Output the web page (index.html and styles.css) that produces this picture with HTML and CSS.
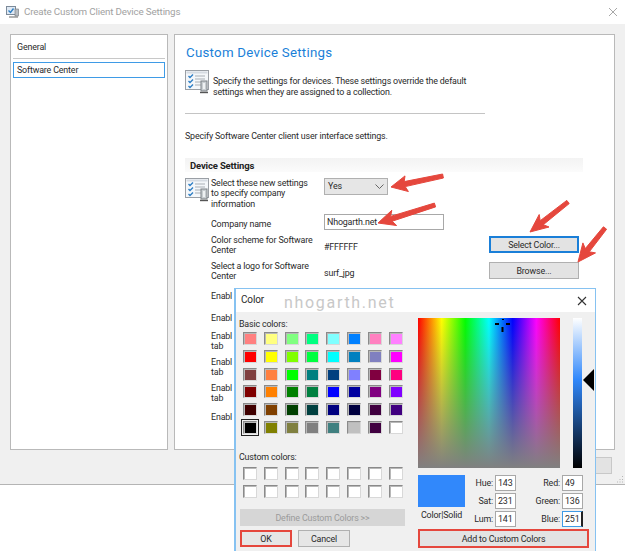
FILE: index.html
```html
<!DOCTYPE html>
<html lang="en">
<head>
<meta charset="utf-8">
<title>Create Custom Client Device Settings</title>
<link rel="stylesheet" href="styles.css">
</head>
<body>
<svg class="defs" width="0" height="0" aria-hidden="true">
  <symbol id="checklist" viewBox="0 0 25 24">
    <rect x="0.5" y="0.5" width="23" height="19" fill="#f4f7fa" stroke="#9a9fa5"/>
    <rect x="1.5" y="1.5" width="21" height="2" fill="#d5dbe2"/>
    <path d="M3.5 6l1.5 1.5L8 4.5M3.5 11l1.5 1.5L8 9.5M3.5 16l1.5 1.5L8 14.5" fill="none" stroke="#2f7fc4" stroke-width="1.4"/>
    <path d="M10 6h10M10 9h10M10 12h7M10 15h6" stroke="#a9afb5"/>
    <rect x="16" y="11" width="6" height="10" fill="#c9ced2" stroke="#7d8286"/>
    <rect x="18" y="13" width="2" height="6" fill="#eef1f2"/>
    <path d="M15 22.5h8" stroke="#555" stroke-width="1.4"/>
  </symbol>
</svg>

<div class="window">
  <header class="titlebar">
    <svg class="title-icon" viewBox="0 0 13 12" aria-hidden="true">
      <rect x="0.5" y="0.5" width="9" height="8" fill="#dfe9f4" stroke="#7c8a99"/>
      <path d="M2.5 4.5l2 2 3-4" fill="none" stroke="#2f7fc4" stroke-width="1.4"/>
      <rect x="9" y="3" width="3.5" height="7" fill="#b9bec3" stroke="#6f7478" stroke-width=".6"/>
      <path d="M3 11h9" stroke="#666"/>
    </svg>
    <span class="title-text">Create Custom Client Device Settings</span>
    <svg class="title-close" viewBox="0 0 10 10" aria-hidden="true"><path d="M1 1l8 8M9 1l-8 8" stroke="#a8a8a8"/></svg>
  </header>

  <div class="workspace">
    <div class="panels">
      <nav class="nav-panel">
        <div class="nav-general">General</div>
        <div class="nav-active">Software Center</div>
      </nav>
      <main class="content-panel">
        <h1 class="page-title">Custom Device Settings</h1>
        <div class="intro">
          <svg class="list-icon"><use href="#checklist"/></svg>
          <p>Specify the settings for devices. These settings override the default<br>settings when they are assigned to a collection.</p>
        </div>
        <hr class="rule">
        <p class="lead">Specify Software Center client user interface settings.</p>
        <h2 class="section-head">Device Settings</h2>
        <div class="form">
          <div class="row row-1">
            <svg class="list-icon"><use href="#checklist"/></svg>
            <div class="label label-first">Select these new settings<br>to specify company<br>information</div>
            <div class="select">Yes<svg class="chev" viewBox="0 0 9 5" aria-hidden="true"><path d="M.5.5l4 4 4-4" fill="none" stroke="#666"/></svg></div>
          </div>
          <div class="row row-2">
            <div class="label">Company name</div>
            <div class="input">Nhogarth.net</div>
          </div>
          <div class="row row-3">
            <div class="label">Color scheme for Software<br>Center</div>
            <div class="value">#FFFFFF</div>
            <div class="btn btn-focus">Select Color...</div>
          </div>
          <div class="row row-4">
            <div class="label">Select a logo for Software<br>Center</div>
            <div class="value">surf_jpg</div>
            <div class="btn">Browse...</div>
          </div>
          <div class="row row-5"><div class="label">Enabl</div></div>
          <div class="row row-6"><div class="label">Enabl</div></div>
          <div class="row row-7"><div class="label">Enabl<br>tab</div></div>
          <div class="row row-8"><div class="label">Enabl<br>tab</div></div>
          <div class="row row-9"><div class="label">Enabl<br>tab</div></div>
          <div class="row row-10"><div class="label">Enabl</div></div>
        </div>
      </main>
    </div>
    <div class="wizard-foot"><div class="foot-btn"></div></div>
    <svg class="grip" viewBox="0 0 8 8" aria-hidden="true"><path d="M6 1h1v1H6zM3.500 4h1v1h-1zM6 4h1v1H6zM1 6.500h1v1H1zM3.500 6.500h1v1h-1zM6 6.500h1v1H6z" fill="#b5b5b5"/></svg>
  </div>
</div>

<svg class="arrows" viewBox="0 0 625 551" aria-hidden="true">
  <polygon points="391,187 405,175.900 404.200,181.600 442.600,174 443.400,178 405.200,186.600 408.400,191.500"/>
  <polygon points="378,223 391.800,210.300 390.600,216.400 434.400,203.100 435.600,206.900 392.200,221.200 396.600,225.500"/>
  <polygon points="530,232 539.200,214.500 540.200,220.700 566.800,200.400 569.200,203.600 543.300,224.700 549,227"/>
  <polygon points="578,262 582.900,242.900 585.300,248.600 603.400,226.800 606.600,229.200 589.300,251.800 595.500,252.900"/>
</svg>

<section class="dialog">
  <header class="dialog-title">
    <span class="dialog-name">Color</span>
    <span class="watermark">nhogarth.net</span>
    <svg class="dialog-close" viewBox="0 0 10 10" aria-hidden="true"><path d="M1 1l8 8M9 1l-8 8" stroke="#333" stroke-width="1.100"/></svg>
  </header>
  <div class="dialog-body">
    <div class="dialog-left">
      <div class="group-label">Basic colors:</div>
      <div class="swatches">
        <i style="background:#FF8080"></i><i style="background:#FFFF80"></i><i style="background:#80FF80"></i><i style="background:#00FF80"></i><i style="background:#80FFFF"></i><i style="background:#0080FF"></i><i style="background:#FF80C0"></i><i style="background:#FF80FF"></i>
        <i style="background:#FF0000"></i><i style="background:#FFFF00"></i><i style="background:#80FF00"></i><i style="background:#00FF40"></i><i style="background:#00FFFF"></i><i style="background:#0080C0"></i><i style="background:#8080C0"></i><i style="background:#FF00FF"></i>
        <i style="background:#804040"></i><i style="background:#FF8040"></i><i style="background:#00FF00"></i><i style="background:#008080"></i><i style="background:#004080"></i><i style="background:#8080FF"></i><i style="background:#800040"></i><i style="background:#FF0080"></i>
        <i style="background:#800000"></i><i style="background:#FF8000"></i><i style="background:#008000"></i><i style="background:#008040"></i><i style="background:#0000FF"></i><i style="background:#0000A0"></i><i style="background:#800080"></i><i style="background:#8000FF"></i>
        <i style="background:#400000"></i><i style="background:#804000"></i><i style="background:#004000"></i><i style="background:#004040"></i><i style="background:#000080"></i><i style="background:#000040"></i><i style="background:#400040"></i><i style="background:#400080"></i>
        <i class="picked" style="background:#000000"></i><i style="background:#808000"></i><i style="background:#808040"></i><i style="background:#808080"></i><i style="background:#408080"></i><i style="background:#C0C0C0"></i><i style="background:#400040"></i><i style="background:#FFFFFF"></i>
      </div>
      <div class="group-label custom-label">Custom colors:</div>
      <div class="swatches custom">
        <i></i><i></i><i></i><i></i><i></i><i></i><i></i><i></i>
        <i></i><i></i><i></i><i></i><i></i><i></i><i></i><i></i>
      </div>
      <div class="define">Define Custom Colors &gt;&gt;</div>
      <div class="dialog-actions">
        <div class="d-btn d-ok">OK</div>
        <div class="d-btn">Cancel</div>
      </div>
    </div>
    <div class="dialog-right">
      <div class="picker">
        <div class="spectrum">
          <svg class="cross" viewBox="0 0 16 13" aria-hidden="true"><path d="M0 4h4v2H0zM11 4h4v2h-4zM7 0h2v1H7zM6.500 8h2v5h-2z" fill="#000"/></svg>
        </div>
        <div class="lum"><span class="lum-arrow"></span></div>
      </div>
      <div class="mix">
        <div class="preview-col">
          <div class="preview"></div>
          <div class="preview-label">Color|Solid</div>
        </div>
        <div class="fields">
          <label>Hue:</label><div class="num">143</div><label>Red:</label><div class="num">49</div>
          <label>Sat:</label><div class="num">231</div><label>Green:</label><div class="num">136</div>
          <label>Lum:</label><div class="num">141</div><label>Blue:</label><div class="num num-active">251</div>
        </div>
      </div>
      <div class="add-btn">Add to Custom Colors</div>
    </div>
  </div>
</section>
</body>
</html>
```

FILE: styles.css
```css
* { box-sizing: border-box; }
html, body { margin: 0; padding: 0; }
body {
  width: 625px;
  height: 551px;
  overflow: hidden;
  position: relative;
  background: #fff;
  color: #2a2a2a;
  font-family: Roboto, "Noto Sans", sans-serif;
  font-size: 8.900px;
  letter-spacing: -.16px;
  line-height: 10.500px;
}
.defs { position: absolute; }

.titlebar {
  height: 24px;
  display: flex;
  align-items: center;
  padding: 0 7px 0 6px;
  background: #fff;
}
.title-icon { width: 13px; height: 12px; margin-right: 5px; }
.title-text { flex: 1; font-size: 9.800px; color: #a2a2a2; }
.title-close { width: 10px; height: 10px; }

.workspace {
  position: relative;
  height: 461px;
  padding: 10px 10px 0;
  background: #f0f0f0;
  border-bottom: 1px solid #b4b4b4;
}
.panels { display: flex; gap: 6px; height: 416px; }
.nav-panel {
  width: 158px;
  background: #fff;
  border: 1px solid #b9b9b9;
  padding: 0 2px;
}
.nav-general {
  height: 24px;
  padding: 7px 4px 0;
  margin-bottom: 3px;
  border-bottom: 1px solid #c8c8c8;
}
.nav-active {
  height: 16px;
  padding: 2px 3px;
  border: 1px solid #3f9be6;
}
.content-panel {
  flex: 1;
  position: relative;
  background: #fff;
  border: 1px solid #b9b9b9;
  padding: 10px 10px 0;
}
.page-title {
  margin: 0 0 0 1px;
  font-size: 13.300px;
  line-height: 16px;
  font-weight: 400;
  color: #1a7fd8;
  letter-spacing: .25px;
}
.list-icon { width: 25px; height: 24px; flex: none; }
.intro { display: flex; margin-top: 9px; }
.intro p { margin: 6px 0 0 3px; }
.rule {
  width: 300px;
  height: 1px;
  margin: 16px 0 0;
  border: 0;
  background: #c4c4c4;
}
.lead { margin: 17px 0 0; }
.section-head {
  width: 398px;
  height: 14px;
  margin: 16px 0 0;
  padding: 2px 5px 0;
  font-size: 9.500px;
  line-height: 11px;
  font-weight: 700;
  color: #222;
  background: linear-gradient(#f3f3f3, #fbfbfb);
}
.form { margin-top: 6px; }
.row { display: flex; align-items: flex-start; padding-left: 26px; }
.row-1 { height: 36px; padding-left: 0; }
.row-2 { height: 21px; }
.row-3 { height: 26px; }
.row-4 { height: 28px; }
.row-5 { height: 22px; padding-top: 2px; }
.row-6 { height: 20px; padding-top: 2px; }
.row-7, .row-8 { height: 26px; }
.row-9 { height: 29px; }
.label { width: 113px; flex: none; }
.label-first { margin-left: 1px; width: 113px; }
.select {
  display: flex;
  align-items: center;
  justify-content: space-between;
  width: 64px;
  height: 17px;
  padding: 0 3px 0 3px;
  background: #e6e6e6;
  border: 1px solid #b0b0b0;
}
.chev { width: 9px; height: 5px; }
.input {
  width: 120px;
  height: 16px;
  padding: 2px;
  border: 1px solid #a8a8a8;
  background: #fff;
}
.row-2 .label { padding-top: 5px; }
.value { width: 165px; flex: none; padding-top: 7px; }
.btn {
  width: 90px;
  height: 17px;
  margin-top: 1px;
  text-align: center;
  line-height: 16px;
  background: #e3e3e3;
  border: 1px solid #b0b0b0;
}
.btn-focus { border: 2px solid #1a7fd8; line-height: 14px; }

.wizard-foot { display: flex; justify-content: flex-end; padding: 7px 3px 0 0; }
.foot-btn { width: 18px; height: 17px; background: #e3e3e3; border: 1px solid #c8c8c8; }
.grip { position: absolute; right: 1px; bottom: 1px; width: 8px; height: 8px; }

.arrows {
  position: absolute;
  left: 0;
  top: 0;
  width: 625px;
  height: 551px;
  pointer-events: none;
}
.arrows polygon {
  fill: #e5473d;
  stroke: #e5473d;
  stroke-linejoin: round;
}

.dialog {
  position: absolute;
  left: 234px;
  top: 288px;
  width: 362px;
  height: 270px;
  background: #f0f0f0;
  border: 1px solid #86c2f1;
  border-left-width: 2px;
  color: #2a2a2a;
}
.dialog-title {
  display: flex;
  align-items: center;
  height: 23px;
  padding: 0 8px 0 5px;
  background: #fff;
}
.dialog-name { font-size: 10px; }
.watermark {
  margin: 6px 0 0 20px;
  flex: 1;
  font-size: 16px;
  letter-spacing: 1.700px;
  color: #c8c8c8;
}
.dialog-close { width: 10px; height: 10px; }
.dialog-body { display: flex; }
.dialog-left { width: 182px; padding: 7px 0 0 4px; }
.group-label { margin-left: -1px; line-height: 11px; }
.swatches {
  display: grid;
  grid-template-columns: repeat(8, 14px);
  grid-auto-rows: 13px;
  column-gap: 6.800px;
  row-gap: 4.800px;
  margin: 2px 0 0 3px;
}
.swatches i {
  display: block;
  border: 1px solid;
  border-color: #8a8a8a #d8d8d8 #d8d8d8 #8a8a8a;
  box-shadow: inset 1px 1px 0 #b8b8b8;
}
.swatches .picked { outline: 1px solid #222; outline-offset: 1px; }
.custom-label { margin-top: 18px; }
.custom { margin-top: 4px; }
.custom i { background: #fff; }
.define {
  width: 165px;
  height: 17px;
  margin-top: 11px;
  text-align: center;
  line-height: 18px;
  color: #9b9b9b;
  background: #d6d6d6;
}
.dialog-actions { display: flex; gap: 6px; margin-top: 4px; }
.d-btn {
  width: 52px;
  height: 17px;
  text-align: center;
  line-height: 16px;
  background: #e6e6e6;
  border: 1px solid #b0b0b0;
}
.d-ok { border: 2px solid #e5473d; line-height: 14px; }
.dialog-right { flex: 1; padding-top: 6px; }
.picker { display: flex; }
.spectrum {
  position: relative;
  width: 142px;
  height: 150px;
  background:
    linear-gradient(to bottom, rgba(128,128,128,0), #808080),
    linear-gradient(to right, #f00, #ff0, #0f0, #0ff, #00f, #f0f, #f00);
}
.cross { position: absolute; left: 77px; top: 1px; width: 16px; height: 13px; }
.lum {
  position: relative;
  width: 9px;
  height: 150px;
  margin-left: 13px;
  background: linear-gradient(#fff, #3188fb 41%, #000);
}
.lum-arrow {
  position: absolute;
  left: 10px;
  top: 51px;
  border-style: solid;
  border-width: 11px 11px 11px 0;
  border-color: transparent #000 transparent transparent;
}
.mix { display: flex; margin-top: 7px; }
.preview-col { width: 47px; text-align: center; }
.preview { height: 32px; background: #3188fb; }
.preview-label { margin-top: 3px; white-space: nowrap; }
.fields {
  display: grid;
  grid-template-columns: 28px 21px 42px 21px;
  grid-auto-rows: 16px;
  column-gap: 2px;
  row-gap: 2px;
}
.fields label { text-align: right; line-height: 17px; }
.num {
  padding-left: 2px;
  line-height: 15px;
  background: #fff;
  border: 1px solid #a8a8a8;
}
.num-active { border-color: #3f9be6; border-right: 2px solid #222; }
.add-btn {
  width: 171px;
  height: 19px;
  margin-top: 2px;
  text-align: center;
  line-height: 16px;
  background: #e3e3e3;
  border: 2px solid #e5473d;
}
```
